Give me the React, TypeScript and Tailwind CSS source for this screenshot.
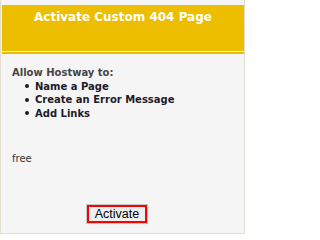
const features = ["Name a Page", "Create an Error Message", "Add Links"];

const App = () => {
  return (
    <div className="w-[245px] h-[234px] bg-[#f5f5f5] border-x border-b border-[#e2dfcf] pt-[5px] pl-px font-['DejaVu_Sans',sans-serif]">
      {/* Header */}
      <div className="h-[46px] bg-[#edbe00] pt-[5px] text-center text-white font-bold text-[12px] leading-[14px]">
        Activate Custom 404 Page
      </div>
      <div className="h-px bg-[#fbf6e0]" />
      <div className="h-[2px] bg-[#edbe00]" />

      {/* Body */}
      <div className="pt-[12px] pl-[10px] text-[10px] leading-[13.5px]">
        <p className="font-bold text-[#454545]">Allow Hostway to:</p>
        <ul className="font-bold text-[#1c1c2c]">
          {features.map((item) => (
            <li key={item} className="flex items-center">
              <span className="ml-[13px] mr-[6px] w-[4px] h-[4px] rounded-full bg-[#1c1c2c]" />
              {item}
            </li>
          ))}
        </ul>

        <p className="mt-[32px] text-[#333333]">free</p>

        <button className="mt-[38px] ml-[74px] block w-[62px] border border-[#c8c8c8]">
          <span className="block border-2 border-[#ff0000] bg-[#f0f0f0] text-center text-black text-[12.5px] leading-[14px] font-['Liberation_Sans',sans-serif]">
            Activate
          </span>
        </button>
      </div>
    </div>
  );
};

export default App;
